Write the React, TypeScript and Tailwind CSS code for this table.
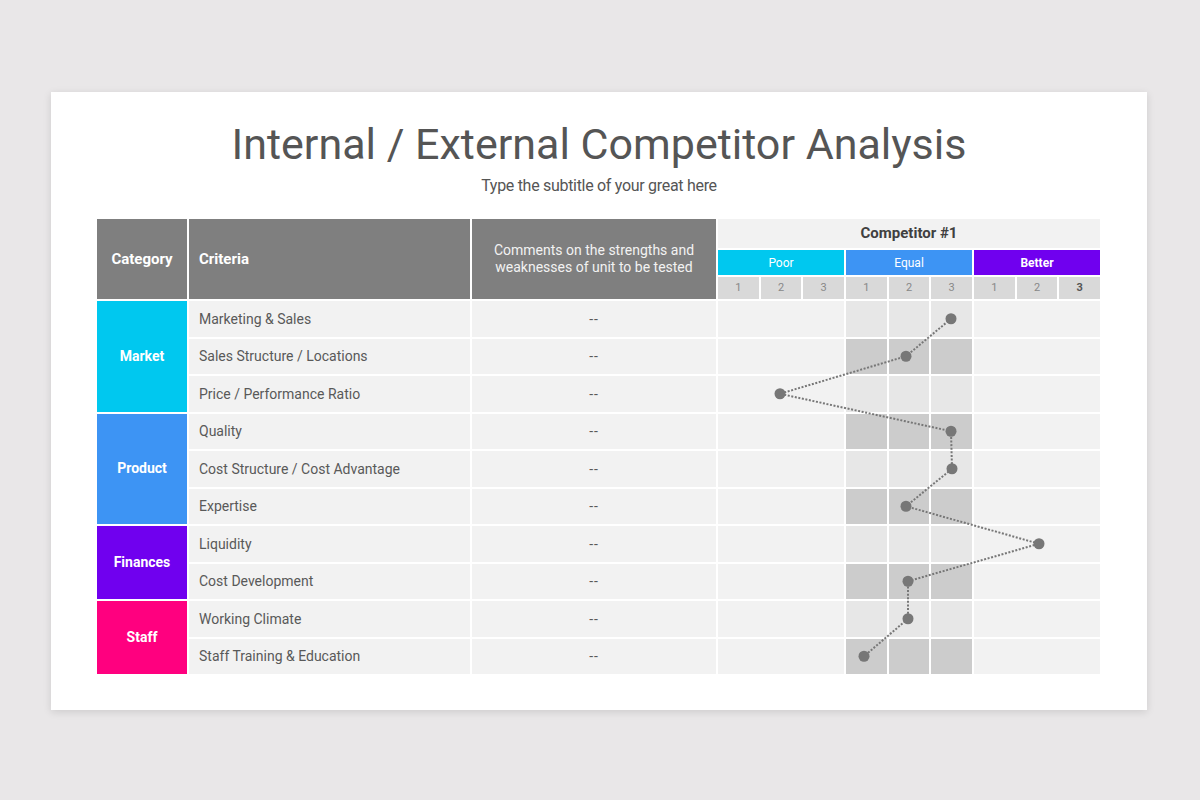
const categories = [
  { name: "Market", bg: "bg-[#00c8ef]", rows: "row-start-2 row-span-3" },
  { name: "Product", bg: "bg-[#3d94f4]", rows: "row-start-5 row-span-3" },
  { name: "Finances", bg: "bg-[#7000ef]", rows: "row-start-8 row-span-2" },
  { name: "Staff", bg: "bg-[#ff007f]", rows: "row-start-10 row-span-2" },
];

const rowStarts = [
  "row-start-2",
  "row-start-3",
  "row-start-4",
  "row-start-5",
  "row-start-6",
  "row-start-7",
  "row-start-8",
  "row-start-9",
  "row-start-10",
  "row-start-11",
];

// x = dot position inside the competitor block (px)
const rows = [
  { criteria: "Marketing & Sales", x: 233 },
  { criteria: "Sales Structure / Locations", x: 188 },
  { criteria: "Price / Performance Ratio", x: 62 },
  { criteria: "Quality", x: 233 },
  { criteria: "Cost Structure / Cost Advantage", x: 234 },
  { criteria: "Expertise", x: 188 },
  { criteria: "Liquidity", x: 321 },
  { criteria: "Cost Development", x: 190 },
  { criteria: "Working Climate", x: 190 },
  { criteria: "Staff Training & Education", x: 146 },
];

const groups = [
  { name: "Poor", bg: "bg-[#00c8ef]", bold: false },
  { name: "Equal", bg: "bg-[#3d94f4]", bold: false },
  { name: "Better", bg: "bg-[#7000ef]", bold: true },
];

function CompetitorHeader() {
  return (
    <div className="col-start-4 row-start-1 flex flex-col gap-[2px]">
      <div className="h-[29px] bg-[#f2f2f2] flex items-center justify-center text-[15px] font-bold text-[#404040]">
        Competitor #1
      </div>
      <div className="h-[25px] grid grid-cols-3 gap-[2px]">
        {groups.map((g) => (
          <div
            key={g.name}
            className={`${g.bg} flex items-center justify-center text-[12px] text-white ${g.bold ? "font-bold" : ""}`}
          >
            {g.name}
          </div>
        ))}
      </div>
      <div className="h-[22px] grid grid-cols-3 gap-[2px]">
        {groups.map((g, gi) => (
          <div key={g.name} className="grid grid-cols-3 gap-[2px]">
            {[1, 2, 3].map((n) => (
              <div
                key={n}
                className={`bg-[#d9d9d9] flex items-center justify-center text-[11px] ${
                  gi === 2 && n === 3 ? "font-bold text-[#555]" : "text-[#888]"
                }`}
              >
                {n}
              </div>
            ))}
          </div>
        ))}
      </div>
    </div>
  );
}

function CompetitorBody() {
  const pts = rows.map((r, i) => ({ x: r.x, y: i * 37.5 + 17.75 }));
  const line = pts.map((p) => `${p.x},${p.y}`).join(" ");
  return (
    <div className="col-start-4 row-start-2 row-span-10 relative grid grid-rows-10 gap-[2px]">
      {rows.map((r, i) => (
        <div key={r.criteria} className="grid grid-cols-3 gap-[2px]">
          <div className="bg-[#f2f2f2]" />
          <div className="grid grid-cols-3 gap-[2px]">
            {[0, 1, 2].map((c) => (
              <div key={c} className={i % 2 === 0 ? "bg-[#e7e7e7]" : "bg-[#cccccc]"} />
            ))}
          </div>
          <div className="bg-[#f2f2f2]" />
        </div>
      ))}
      <svg
        className="absolute inset-0 w-full h-full pointer-events-none"
        viewBox="0 0 382 373"
      >
        <polyline
          points={line}
          fill="none"
          stroke="#777"
          strokeWidth="2"
          strokeDasharray="2 1.6"
        />
        {pts.map((p, i) => (
          <circle key={i} cx={p.x} cy={p.y} r="5.5" fill="#777" />
        ))}
      </svg>
    </div>
  );
}

export default function App() {
  return (
    <div
      className="w-[1200px] h-[800px] bg-[#e9e7e8] pt-[92px] pl-[51px]"
      style={{ fontFamily: "Roboto, 'Noto Sans', sans-serif" }}
    >
      <div className="w-[1096px] h-[618px] bg-white shadow-[0_2px_8px_rgba(0,0,0,0.12)] pt-[31px] flex flex-col">
        <h1 className="text-center text-[43px] leading-[43px] text-[#555] font-normal">
          Internal / External Competitor Analysis
        </h1>
        <p className="mt-[11.5px] text-center text-[16px] leading-[16px] tracking-[-0.3px] text-[#555]">
          Type the subtitle of your great here
        </p>

        <div className="mt-[25.5px] ml-[46px] w-[1003px] grid grid-cols-[90px_281px_244px_382px] grid-rows-[80px_repeat(10,35.5px)] gap-[2px]">
          <div className="col-start-1 row-start-1 bg-[#7f7f7f] flex items-center justify-center text-[15px] font-bold text-white">
            Category
          </div>
          <div className="col-start-2 row-start-1 bg-[#7f7f7f] flex items-center pl-[10px] text-[15px] font-bold text-white">
            Criteria
          </div>
          <div className="col-start-3 row-start-1 bg-[#7f7f7f] flex items-center justify-center text-center text-[14px] leading-[17px] text-[#f2f2f2]">
            Comments on the strengths and
            <br />
            weaknesses of unit to be tested
          </div>
          <CompetitorHeader />

          {categories.map((c) => (
            <div
              key={c.name}
              className={`col-start-1 ${c.rows} ${c.bg} flex items-center justify-center text-[14px] font-bold text-white`}
            >
              {c.name}
            </div>
          ))}

          {rows.map((r, i) => (
            <div key={r.criteria} className="contents">
              <div
                className={`col-start-2 ${rowStarts[i]} bg-[#f2f2f2] flex items-center pl-[10px] pt-[1px] text-[14px] text-[#595959]`}
              >
                {r.criteria}
              </div>
              <div
                className={`col-start-3 ${rowStarts[i]} bg-[#f2f2f2] flex items-center justify-center pt-[1px] text-[14px] tracking-[1px] text-[#595959]`}
              >
                -&#8203;-
              </div>
            </div>
          ))}

          <CompetitorBody />
        </div>
      </div>
    </div>
  );
}
